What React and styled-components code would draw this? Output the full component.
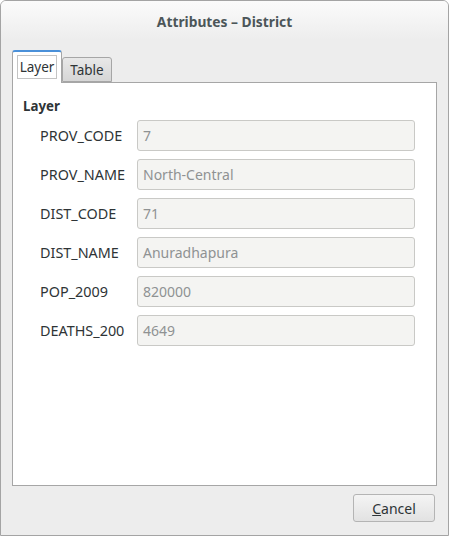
import React from "react";
import styled, { createGlobalStyle } from "styled-components";

const Global = createGlobalStyle`
  html, body { margin: 0; padding: 0; background: #ffffff; }
  * { box-sizing: border-box; }
`;

const FONT = `"Noto Sans", "Open Sans", sans-serif`;

const Window = styled.div`
  width: 449px;
  height: 536px;
  border: 1px solid #a4a4a4;
  border-radius: 6px 6px 0 0;
  background: #ededed;
  display: flex;
  flex-direction: column;
  font-family: ${FONT};
  overflow: hidden;
`;

const TitleBar = styled.div`
  height: 39px;
  display: flex;
  align-items: center;
  justify-content: center;
  background: linear-gradient(#fbfbfb, #ededed);
  font-weight: bold;
  font-size: 13.8px;
  color: #4c5659;
  padding-top: 1px;
`;

const Body = styled.div`
  flex: 1;
  display: flex;
  flex-direction: column;
  padding: 10px 11px 13px 11px;
`;

const Tabs = styled.div`
  display: flex;
  align-items: flex-end;
  height: 32px;
`;

const Tab = styled.div`
  height: ${(p) => (p.$active ? 33 : 25)}px;
  width: 50px;
  margin-bottom: ${(p) => (p.$active ? -1 : 0)}px;
  position: relative;
  z-index: ${(p) => (p.$active ? 2 : 1)};
  border: 1px solid #a6a6a6;
  border-bottom: ${(p) => (p.$active ? "none" : "1px solid #a6a6a6")};
  border-top: ${(p) => (p.$active ? "2px solid #4a90d9" : "1px solid #a6a6a6")};
  border-radius: 3px 3px 0 0;
  background: ${(p) => (p.$active ? "#ffffff" : "linear-gradient(#e8e8e8, #d6d6d6)")};
  display: flex;
  align-items: ${(p) => (p.$active ? "flex-start" : "center")};
  justify-content: center;
  padding: ${(p) => (p.$active ? "3px 4px 0" : "0")};
  font-size: 13.5px;
  color: #2e3436;
`;

const Focus = styled.div`
  width: 100%;
  height: 24px;
  border: 1px solid #c4c4c4;
  display: flex;
  align-items: center;
  justify-content: center;
`;

const Panel = styled.div`
  height: 404px;
  background: #ffffff;
  border: 1px solid #a6a6a6;
  padding: 15px 10px 0 10px;
`;

const GroupTitle = styled.div`
  font-weight: bold;
  font-size: 13.3px;
  color: #2e3436;
  line-height: 17px;
  margin-bottom: 5px;
`;

const Form = styled.div`
  display: grid;
  grid-template-columns: 97px 278px;
  row-gap: 8px;
  padding-left: 17px;
`;

const Label = styled.div`
  font-size: 14.4px;
  color: #2e3436;
  display: flex;
  align-items: center;
  white-space: nowrap;
  overflow: hidden;
`;

const Field = styled.div`
  height: 31px;
  background: #f4f4f2;
  border: 1px solid #c9c9c6;
  border-radius: 3px;
  display: flex;
  align-items: center;
  padding-left: 5px;
  font-size: 14px;
  color: #8f9293;
`;

const Footer = styled.div`
  display: flex;
  justify-content: flex-end;
  padding: 8px 2px 0 0;
`;

const Button = styled.div`
  width: 82px;
  height: 28px;
  border: 1px solid #b4b4b4;
  border-radius: 3px;
  background: linear-gradient(#f4f4f4, #e2e2e2);
  display: flex;
  align-items: center;
  justify-content: center;
  font-size: 14px;
  color: #2e3436;
`;

const rows = [
  ["PROV_CODE", "7"],
  ["PROV_NAME", "North-Central"],
  ["DIST_CODE", "71"],
  ["DIST_NAME", "Anuradhapura"],
  ["POP_2009", "820000"],
  ["DEATHS_200", "4649"],
];

export default function App() {
  return (
    <>
      <Global />
      <Window>
        <TitleBar>Attributes – District</TitleBar>
        <Body>
          <Tabs>
            <Tab $active>
              <Focus>Layer</Focus>
            </Tab>
            <Tab>Table</Tab>
          </Tabs>
          <Panel>
            <GroupTitle>Layer</GroupTitle>
            <Form>
              {rows.map(([k, v]) => (
                <React.Fragment key={k}>
                  <Label>{k}</Label>
                  <Field>{v}</Field>
                </React.Fragment>
              ))}
            </Form>
          </Panel>
          <Footer>
            <Button>
              <span>
                <u>C</u>ancel
              </span>
            </Button>
          </Footer>
        </Body>
      </Window>
    </>
  );
}
